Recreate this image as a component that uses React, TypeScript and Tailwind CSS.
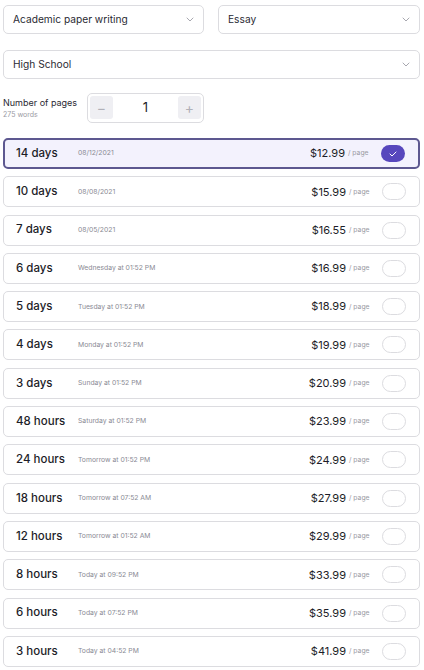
import React from "react";

const rows = [
  { label: "14 days", date: "08/12/2021", price: "$12.99", selected: true },
  { label: "10 days", date: "08/08/2021", price: "$15.99" },
  { label: "7 days", date: "08/05/2021", price: "$16.55" },
  { label: "6 days", date: "Wednesday at 01:52 PM", price: "$16.99" },
  { label: "5 days", date: "Tuesday at 01:52 PM", price: "$18.99" },
  { label: "4 days", date: "Monday at 01:52 PM", price: "$19.99" },
  { label: "3 days", date: "Sunday at 01:52 PM", price: "$20.99" },
  { label: "48 hours", date: "Saturday at 01:52 PM", price: "$23.99" },
  { label: "24 hours", date: "Tomorrow at 01:52 PM", price: "$24.99" },
  { label: "18 hours", date: "Tomorrow at 07:52 AM", price: "$27.99" },
  { label: "12 hours", date: "Tomorrow at 01:52 AM", price: "$29.99" },
  { label: "8 hours", date: "Today at 09:52 PM", price: "$33.99" },
  { label: "6 hours", date: "Today at 07:52 PM", price: "$35.99" },
  { label: "3 hours", date: "Today at 04:52 PM", price: "$41.99" },
];

function Chevron() {
  return (
    <svg width="8" height="5" viewBox="0 0 8 5" fill="none" className="shrink-0">
      <path d="M1 1l3 3 3-3" stroke="#a8a8b0" strokeWidth="1" strokeLinecap="round" strokeLinejoin="round" />
    </svg>
  );
}

function Select({ text, className }: { text: string; className?: string }) {
  return (
    <div
      className={
        "flex h-[29px] items-center justify-between rounded-[5px] border border-[#dcdce0] bg-white pl-[9px] pr-[9px] " +
        (className ?? "")
      }
    >
      <span className="text-[10.2px] text-[#2a2a33]">{text}</span>
      <Chevron />
    </div>
  );
}

export default function App() {
  return (
    <div
      className="w-[424px] h-[670px] overflow-hidden bg-white px-[3px] pt-[5px]"
      style={{ fontFamily: "Inter, 'Noto Sans', sans-serif" }}
    >
      <div className="flex gap-[14px] pr-[1px]">
        <Select text="Academic paper writing" className="w-[201px]" />
        <Select text="Essay" className="flex-1" />
      </div>
      <Select text="High School" className="mt-[16px] mr-[1px]" />

      <div className="mt-[14px] flex items-center h-[29px]">
        <div className="w-[84px] leading-none">
          <div className="text-[9px] text-[#2a2a33]">Number of pages</div>
          <div className="mt-[4px] text-[7px] text-[#9a9aa3]">275 words</div>
        </div>
        <div className="flex h-[30px] w-[117px] items-center justify-between rounded-[5px] border border-[#dcdce0] px-[2px]">
          <div className="flex h-[23px] w-[23px] items-center justify-center rounded-[3px] bg-[#efeff3] text-[14px] text-[#b0b0b8]">
            −
          </div>
          <span className="text-[13px] text-[#1d1d28]">1</span>
          <div className="flex h-[23px] w-[23px] items-center justify-center rounded-[3px] bg-[#efeff3] text-[14px] text-[#b0b0b8]">
            +
          </div>
        </div>
      </div>

      <div className="mt-[16px] flex flex-col gap-[7.3px] pr-[1px]">
        {rows.map((r) => (
          <div
            key={r.label}
            className={
              "flex h-[31px] items-center rounded-[5px] pr-[13px] " +
              (r.selected
                ? "border-2 border-[#5d5890] bg-[#f3f2fd] pl-[11px]"
                : "border border-[#dcdce0] bg-white pl-[12px]")
            }
          >
            <span className="w-[62px] text-[11.5px] font-medium text-[#1d1d28]">{r.label}</span>
            <span className="flex-1 text-[6.8px] text-[#8a8a94]">{r.date}</span>
            <span className="text-[11px] text-[#1d1d28]">{r.price}</span>
            <span className="ml-[3px] w-[26px] text-[6.8px] text-[#9a9aa3]">/ page</span>
            <span
              className={
                "ml-[7px] flex h-[17px] w-[24px] items-center justify-center rounded-full " +
                (r.selected ? "bg-[#5747bd]" : "border border-[#dcdce0] bg-white")
              }
            >
              {r.selected && (
                <svg width="8" height="6" viewBox="0 0 8 6" fill="none">
                  <path d="M1 3l2 2 4-4" stroke="white" strokeWidth="1" strokeLinecap="round" strokeLinejoin="round" />
                </svg>
              )}
            </span>
          </div>
        ))}
      </div>
    </div>
  );
}
